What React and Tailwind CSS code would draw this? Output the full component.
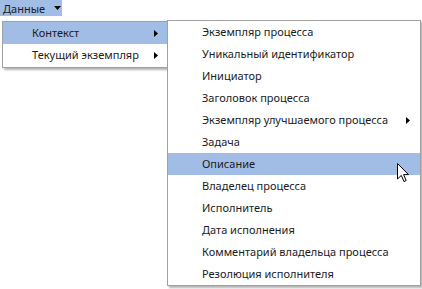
import React from "react";

const font = { fontFamily: '"Noto Sans", "Open Sans", sans-serif' };

const subItems = [
  { label: "Экземпляр процесса" },
  { label: "Уникальный идентификатор" },
  { label: "Инициатор" },
  { label: "Заголовок процесса" },
  { label: "Экземпляр улучшаемого процесса", sub: true },
  { label: "Задача" },
  { label: "Описание", active: true },
  { label: "Владелец процесса" },
  { label: "Исполнитель" },
  { label: "Дата исполнения" },
  { label: "Комментарий владельца процесса" },
  { label: "Резолюция исполнителя" },
];

function RightArrow() {
  return (
    <svg width="4" height="7" viewBox="0 0 4 7" className="shrink-0">
      <path d="M0 0 L4 3.5 L0 7 Z" fill="#000" />
    </svg>
  );
}

function Cursor() {
  return (
    <svg width="13" height="20" viewBox="0 0 13 20" className="absolute left-[397px] top-[163px]">
      <path
        d="M0.5 0.5 L0.5 16 L4.3 12.4 L7 18.6 L9.2 17.6 L6.6 11.6 L11.5 11.6 Z"
        fill="#fff"
        stroke="#000"
        strokeWidth="1"
      />
    </svg>
  );
}

function MenuRow({ label, active, sub, pad }) {
  return (
    <div
      className={`h-[22px] flex items-center pt-[1px] ${pad} pr-[10px] ${active ? "bg-[#a2bde5]" : ""}`}
    >
      <span className="flex-1 whitespace-nowrap">{label}</span>
      {sub && <RightArrow />}
    </div>
  );
}

export default function App() {
  return (
    <div className="relative w-[422px] h-[289px] bg-white text-[11px] text-[#1b1b1b] overflow-hidden" style={font}>
      <div className="inline-flex items-center h-[16px] w-[62px] bg-[#a2bde5] pl-[3px] gap-[9px]">
        <span className="leading-none">Данные</span>
        <svg width="7" height="4" viewBox="0 0 7 4">
          <path d="M0 0 L7 0 L3.5 4 Z" fill="#000" />
        </svg>
      </div>

      <div className="absolute left-[2px] top-[21px] w-[167px] border border-[#a0a0a0] bg-white pb-[1px] shadow-[2px_2px_2px_rgba(0,0,0,0.3)]">
        <MenuRow label="Контекст" active sub pad="pl-[29px]" />
        <MenuRow label="Текущий экземпляр" sub pad="pl-[29px]" />
      </div>

      <div className="absolute left-[167px] top-[20px] w-[254px] border border-[#a0a0a0] bg-white shadow-[2px_2px_2px_rgba(0,0,0,0.3)]">
        {subItems.map((it) => (
          <MenuRow key={it.label} {...it} pad="pl-[34px]" />
        ))}
      </div>

      <Cursor />
    </div>
  );
}
